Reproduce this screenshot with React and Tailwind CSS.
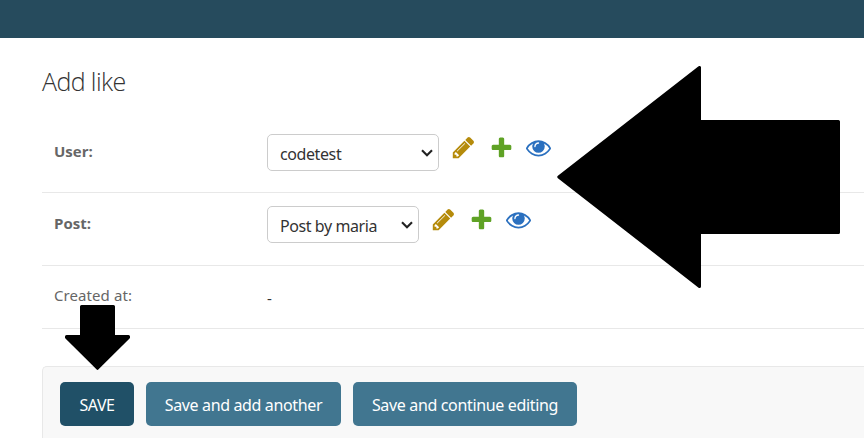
import React from "react";

const PENCIL =
  "M491 1536l91-91-235-235-91 91v107h128v128h107zm523-928q0-22-22-22-10 0-17 7l-542 542q-7 7-7 17 0 22 22 22 10 0 17-7l542-542q7-7 7-17zm-54-192l416 416-832 832h-416v-416zm683 96q0 53-37 90l-166 166-416-416 166-165q36-38 90-38 53 0 91 38l235 234q37 39 37 91z";
const PLUS =
  "M1600 796v192q0 40-28 68t-68 28h-416v416q0 40-28 68t-68 28h-192q-40 0-68-28t-28-68v-416h-416q-40 0-68-28t-28-68v-192q0-40 28-68t68-28h416v-416q0-40 28-68t68-28h192q40 0 68 28t28 68v416h416q40 0 68 28t28 68z";
const EYE =
  "M1664 960q-152-236-381-353 61 104 61 225 0 185-131.5 316.5t-316.5 131.5-316.5-131.5-131.5-316.5q0-121 61-225-229 117-381 353 133 205 333.5 326.5t434.5 121.5 434.5-121.5 333.5-326.5zm-720-384q0-20-14-34t-34-14q-125 0-214.5 89.5t-89.5 214.5q0 20 14 34t34 14 34-14 14-34q0-86 61-147t147-61q20 0 34-14t14-34zm848 384q0 34-20 69-140 230-376.5 368.5t-499.5 138.5-499.5-139-376.5-368q-20-35-20-69t20-69q140-229 376.5-368t499.5-139 499.5 139 376.5 368q20 35 20 69z";

function Icon({ d, className }) {
  return (
    <svg viewBox="0 0 1792 1792" className={`size-[25px] shrink-0 ${className}`}>
      <path d={d} fill="currentColor" />
    </svg>
  );
}

function RelatedSelect({ value, className, textClass }) {
  return (
    <div className="flex items-start">
      <div
        className={`flex h-[37px] items-center justify-between rounded-[5px] border border-[#ccc] bg-white pl-3 pr-[5px] text-[#333] ${className}`}
      >
        <span className={`mt-[3px] whitespace-nowrap text-base leading-5 ${textClass}`}>{value}</span>
        <svg viewBox="0 0 12 8" className="h-2 w-3" fill="none" stroke="#222" strokeWidth="2.1">
          <path d="M1 1.3l5 5 5-5" />
        </svg>
      </div>
      <div className="ml-3 mt-px flex">
        <Icon d={PENCIL} className="text-[#b58b0b]" />
        <Icon d={PLUS} className="ml-[13px] text-[#5fa225]" />
        <Icon d={EYE} className="ml-3 text-[#2b70bf]" />
      </div>
    </div>
  );
}

export default function App() {
  return (
    <div className="relative h-[438px] w-[864px] overflow-hidden bg-white font-['Noto_Sans',sans-serif] text-base text-[#333]">
      <header className="h-[38px] bg-[#264b5d]" />
      <main className="pl-[42px]">
        <h1 className="h-[82px] pt-[29px] font-['Open_Sans',sans-serif] text-[25px] font-light leading-[28px] tracking-[-0.6px] text-[#333]">
          Add like
        </h1>
        <div className="flex h-[73px] border-b border-[#e8e8e8] pl-3 pt-[14px]">
          <label className="w-[213px] pt-[7px] font-['Open_Sans',sans-serif] text-[15px] font-bold leading-5 text-[#666]">User:</label>
          <RelatedSelect value="codetest" className="w-[172px]" textClass="tracking-[-0.4px]" />
        </div>
        <div className="flex h-[73px] border-b border-[#e8e8e8] pl-3 pt-[13px]">
          <label className="w-[213px] pt-[7px] font-['Open_Sans',sans-serif] text-[15px] font-bold leading-5 text-[#666]">Post:</label>
          <RelatedSelect value="Post by maria" className="w-[152px]" textClass="tracking-[-0.42px]" />
        </div>
        <div className="flex h-[63px] border-b border-[#e8e8e8] pl-3">
          <label className="w-[213px] pt-[19px] text-[15px] leading-5 tracking-[0.08px] text-[#666]">Created at:</label>
          <div className="pt-[22px] text-[15px] leading-5">-</div>
        </div>
        <div className="mt-[37px] flex h-[90px] gap-3 rounded-tl-[5px] border-l border-t border-[#e8e8e8] bg-[#f8f8f8] pl-[17px] pt-[15px] text-base text-white">
          <button className="h-[44px] w-[74px] whitespace-nowrap rounded-[5px] bg-[#205067] pt-px tracking-[-0.5px]">SAVE</button>
          <button className="h-[44px] w-[195px] whitespace-nowrap rounded-[5px] bg-[#417690] pt-px tracking-[-0.36px]">Save and add another</button>
          <button className="h-[44px] w-[224px] whitespace-nowrap rounded-[5px] bg-[#417690] pt-px tracking-[-0.34px]">Save and continue editing</button>
        </div>
      </main>
      <svg
        viewBox="0 0 283 222"
        className="absolute left-[557px] top-[66px] h-[222px] w-[283px]"
        stroke="#000"
        strokeWidth="3"
        strokeLinejoin="round"
      >
        <path d="M1.8 111L142.5 1.5V55.5H281.5V166.5H142.5V220.5Z" />
      </svg>
      <svg
        viewBox="0 0 65 65"
        className="absolute left-[65px] top-[305px] h-[65px] w-[65px]"
        stroke="#000"
        strokeWidth="3"
        strokeLinejoin="round"
      >
        <path d="M16.5 1.5H48.5V31.5H63.5V32.5L32.5 63.3L1.5 32.5V31.5H16.5Z" />
      </svg>
    </div>
  );
}
